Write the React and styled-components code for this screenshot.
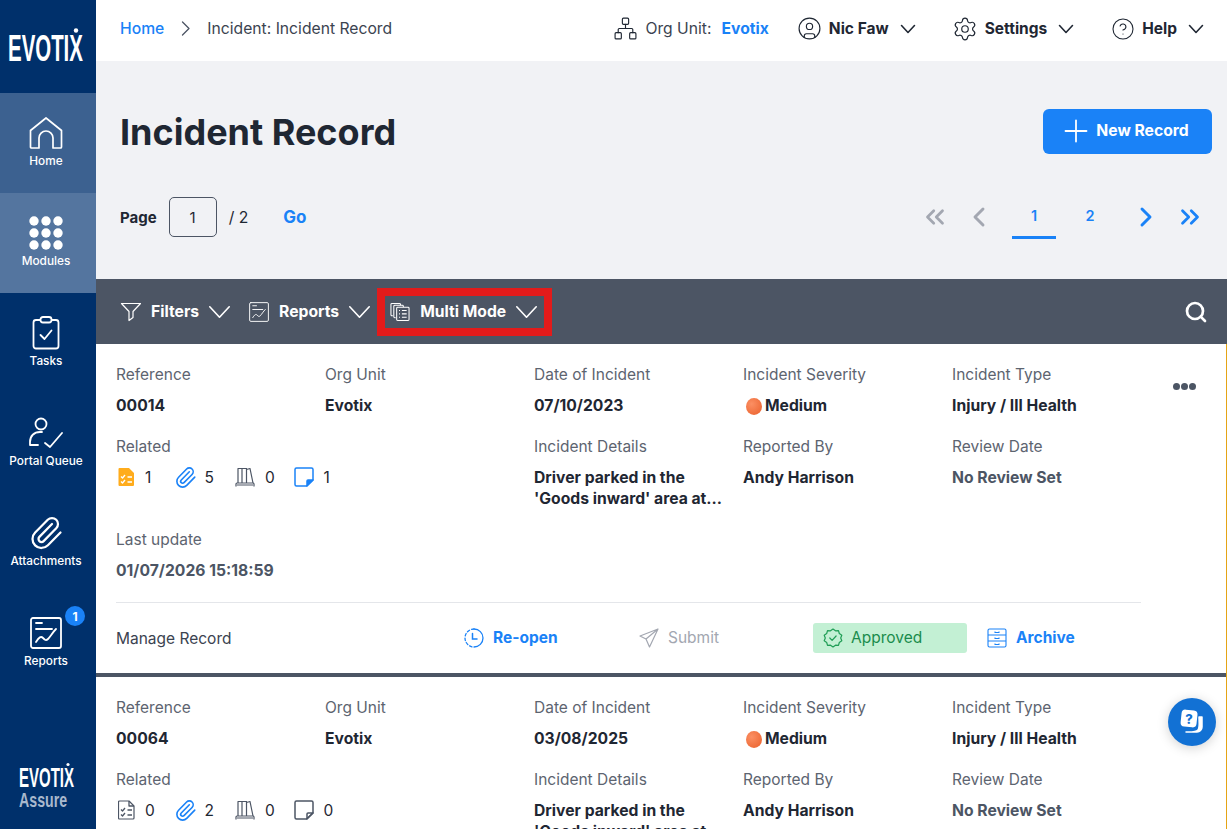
import styled, { createGlobalStyle } from 'styled-components'
import { ChevronLeft, ChevronRight, ChevronsLeft, ChevronsRight, Search, Plus, Settings, CircleHelp, CircleUser, Network, Paperclip } from 'lucide-react'

const GlobalStyle = createGlobalStyle`
  html, body {
    margin: 0;
    height: 100%;
    overflow: hidden;
    background: #fff;
    font-family: Inter, "Open Sans", sans-serif;
    color: #1f2733;
  }
  #root { height: 100%; }
  * { box-sizing: border-box; }
`

const ChevDown = ({ width = 14, stroke = 1.6, color = 'currentColor' }) => (
  <svg width={width} height={width * 0.57} viewBox="0 0 14 8" fill="none" stroke={color} strokeWidth={stroke} strokeLinecap="round" strokeLinejoin="round" style={{ overflow: 'visible' }}>
    <path d="M.5.5 7 7.5 13.500.5" />
  </svg>
)

const ChevRight = () => (
  <svg width="9" height="15" viewBox="0 0 9 15" fill="none" stroke="#4c5564" strokeWidth="1.3" strokeLinecap="round" strokeLinejoin="round">
    <path d="m1.5 1 6.500 6.500L1.500 14" />
  </svg>
)

const HomeIcon = () => (
  <svg width="34" height="34" viewBox="0 0 34 34" fill="none" stroke="#fff" strokeWidth="1.7" strokeLinejoin="round">
    <path d="M1.5 14.500 17 2l15.500 12.500V31a1 1 0 0 1-1 1H24V22a7 7 0 0 0-14 0v10H2.500a1 1 0 0 1-1-1z" />
  </svg>
)

const DotsIcon = () => (
  <svg width="34" height="34" viewBox="0 0 34 34" fill="#fff">
    {[5, 17, 29].map(y => [5, 17, 29].map(x => <circle key={`${x}-${y}`} cx={x} cy={y} r="4.7" />))}
  </svg>
)

const TaskIcon = () => (
  <svg width="28" height="34" viewBox="0 0 28 34" fill="none" stroke="#fff" strokeWidth="1.8" strokeLinejoin="round" strokeLinecap="round">
    <rect x="1.5" y="4" width="25" height="28.5" rx="2.5" />
    <rect x="8.5" y="1" width="11" height="5.5" rx="2.5" fill="#00306b" />
    <path d="m8.5 19 4 4 7-8.500" />
  </svg>
)

const QueueIcon = () => (
  <svg width="34" height="32" viewBox="0 0 34 32" fill="none" stroke="#fff" strokeWidth="1.8" strokeLinecap="round" strokeLinejoin="round">
    <circle cx="12" cy="7" r="5.5" />
    <path d="M1 28v-3c0-6 4-10 10-10h2M1 28h8" />
    <path d="m16 26 5 4 12-14" />
  </svg>
)

const ReportIcon = ({ size = 32, color = '#fff', width = 1.8 }) => (
  <svg width={size} height={size} viewBox="0 0 32 32" fill="none" stroke={color} strokeWidth={width} strokeLinecap="round" strokeLinejoin="round">
    <rect x="1" y="1" width="30" height="30" rx="2" />
    <path d="M6 6h6M6 12h16M6 25c3-5 5-6 7-4s3 3 5 1 5-7 8-10" />
  </svg>
)

const FilterIcon = () => (
  <svg width="21" height="21" viewBox="0 0 21 21" fill="none" stroke="#fff" strokeWidth="1.2" strokeLinejoin="round">
    <path d="M1.5 2.500h19l-7.500 8v6l-4 3v-9z" />
  </svg>
)

const MultiIcon = () => (
  <svg width="20" height="21" viewBox="0 0 21 21" fill="none" stroke="#fff" strokeWidth="1.1" strokeLinejoin="round">
    <path d="M3 15H2a1 1 0 0 1-1-1V3a1 1 0 0 1 1-1h8a1 1 0 0 1 1 1v1" />
    <path d="M6 17H5a1 1 0 0 1-1-1V5a1 1 0 0 1 1-1h8a1 1 0 0 1 1 1v1" />
    <rect x="7" y="6" width="13" height="14" rx="1" fill="#4c5564" />
    <path d="M9.5 9.500h1M9.500 13h1M9.500 16.500h1M12.500 9.500h5M12.500 13h5M12.500 16.500h5" />
  </svg>
)

const ChecklistIcon = ({ filled }) => (
  <svg width="17" height="20" viewBox="0 0 17 20" fill={filled ? '#ffac1c' : 'none'} stroke={filled ? 'none' : '#4c5564'} strokeWidth="1.2" strokeLinejoin="round">
    <path d="M1.5 1h9.500l5 5v12a1 1 0 0 1-1 1H1.500a1 1 0 0 1-1-1V2a1 1 0 0 1 1-1z" />
    <g fill="none" stroke={filled ? '#fff' : '#4c5564'} strokeWidth="1.3">
      <path d="m3 9.500 1.500 1.500 2.500-3M3 14.500l1.500 1.500 2.500-3M9.500 10h4.500M9.500 15h4.500" />
      {!filled && <path d="M11 1v5h5" />}
    </g>
  </svg>
)

const BooksIcon = () => (
  <svg width="20" height="20" viewBox="0 0 20 20" fill="none" stroke="#4c5564" strokeWidth="1.2" strokeLinejoin="round">
    <path d="M3 16V1.500h4V16M7 16V1.500h4.500V16M11.500 2.500l3.500-1 3 14.500" />
    <path d="M1 19.500V17a1 1 0 0 1 1-1h16a1 1 0 0 1 1 1v2.500M2 18h16" />
  </svg>
)

const NoteIcon = ({ color, lit }) => (
  <svg width="20" height="20" viewBox="0 0 20 20" fill="none" stroke={color} strokeWidth="1.5" strokeLinejoin="round">
    <path d="M12.5 19h-10A1.500 1.500 0 0 1 1 17.500v-15A1.500 1.500 0 0 1 2.500 1h15A1.500 1.500 0 0 1 19 2.500V13z" />
    <path d="M13 19v-5a1 1 0 0 1 1-1h5z" fill={lit ? color : 'none'} />
  </svg>
)

const ReopenIcon = () => (
  <svg width="20" height="20" viewBox="0 0 20 20" fill="none" stroke="#1a82f7" strokeWidth="1.3" strokeLinecap="round">
    <path d="M10 1a9 9 0 0 1 0 18" />
    <path d="M10 1a9 9 0 0 0 0 18" strokeDasharray="2.5 2.2" />
    <path d="M8.5 5.500V11H13" strokeWidth="1.5" />
  </svg>
)

const SendIcon = () => (
  <svg width="20" height="20" viewBox="0 0 20 20" fill="none" stroke="#a3a7b1" strokeWidth="1.2" strokeLinejoin="round">
    <path d="M19 1 1 8l6 3 3.500 8zM19 1 7 11" />
  </svg>
)

const BadgeCheckIcon = () => (
  <svg width="20" height="20" viewBox="0 0 20 20" fill="none" stroke="#1f9d55" strokeWidth="1.2" strokeLinejoin="round" strokeLinecap="round">
    <path d="m10 1 2.500 1.800 3-.2.800 2.900 2.500 1.700L17.700 10l1.100 2.800-2.500 1.700-.8 2.900-3-.2L10 19l-2.500-1.800-3 .2-.8-2.900-2.500-1.700L2.300 10 1.200 7.200l2.500-1.700.8-2.900 3 .2z" />
    <path d="m6.800 10 2.300 2.300 4-4.300" />
  </svg>
)

const ArchiveIcon = () => (
  <svg width="20" height="20" viewBox="0 0 20 20" fill="none" stroke="#1a82f7" strokeWidth="1.1" strokeLinejoin="round">
    <rect x="1" y="1" width="18" height="18" rx="1.5" />
    <path d="M1 7h18M1 13h18M8 3.500v1h4v-1M8 9.500v1h4v-1M8 15.500v1h4v-1" />
  </svg>
)

const ChatIcon = () => (
  <svg width="26" height="26" viewBox="0 0 26 26">
    <path d="M23 8v10a5 5 0 0 1-5 5H7c3 0 10 .5 12-2s1-9 1-13z" fill="#fff" stroke="#fff" strokeWidth="1.5" strokeLinejoin="round" />
    <rect x="2" y="1" width="16" height="17" rx="4" fill="#fff" transform="rotate(6 10 10)" />
    <text x="10" y="15" textAnchor="middle" fontSize="13" fontWeight="800" fill="#1271d4" fontFamily="Inter">?</text>
  </svg>
)

const navItems = [
  { label: 'Home', icon: <HomeIcon />, tone: 'home' },
  { label: 'Modules', icon: <DotsIcon />, tone: 'modules' },
  { label: 'Tasks', icon: <TaskIcon /> },
  { label: 'Portal Queue', icon: <QueueIcon /> },
  { label: 'Attachments', icon: <Paperclip size={36} color="#fff" strokeWidth={1.5} /> },
  { label: 'Reports', icon: <ReportIcon />, badge: 1 },
]

const records = [
  { reference: '00014', date: '07/10/2023', counts: [1, 5, 0, 1], lit: true },
  { reference: '00064', date: '03/08/2025', counts: [0, 2, 0, 0], lit: false },
]

function Field({ label, children, span }) {
  return (
    <FieldBox $span={span}>
      <Label>{label}</Label>
      {children}
    </FieldBox>
  )
}

function Record({ record }) {
  const { lit, counts } = record
  return (
    <Card>
      <Grid>
        <Field label="Reference"><Value>{record.reference}</Value></Field>
        <Field label="Org Unit"><Value>Evotix</Value></Field>
        <Field label="Date of Incident"><Value>{record.date}</Value></Field>
        <Field label="Incident Severity"><Value><SeverityDot />Medium</Value></Field>
        <Field label="Incident Type"><Value>Injury / Ill Health</Value></Field>
        <Field label="Related" span={2}>
          <Related>
            <RelatedItem><ChecklistIcon filled={lit} /><Count>{counts[0]}</Count></RelatedItem>
            <RelatedItem><RelatedClip size={23} color="#1a82f7" strokeWidth={1.7} /><Count>{counts[1]}</Count></RelatedItem>
            <RelatedItem><BooksIcon /><Count>{counts[2]}</Count></RelatedItem>
            <RelatedItem><NoteIcon color={lit ? '#1a82f7' : '#4c5564'} lit={lit} /><Count>{counts[3]}</Count></RelatedItem>
          </Related>
        </Field>
        <Field label="Incident Details"><Details>Driver parked in the 'Goods inward' area at...</Details></Field>
        <Field label="Reported By"><Value>Andy Harrison</Value></Field>
        <Field label="Review Date"><Value $muted>No Review Set</Value></Field>
        <Field label="Last update" span={5}><Value $muted>01/07/2026 15:18:59</Value></Field>
      </Grid>
      <MoreDots><i /><i /><i /></MoreDots>
      <ManageRow>
        <ManageLabel>Manage Record</ManageLabel>
        <ManageAction><ReopenIcon />Re-open</ManageAction>
        <ManageAction $off><SendIcon />Submit</ManageAction>
        <Approved><BadgeCheckIcon />Approved</Approved>
        <ManageAction><ArchiveIcon />Archive</ManageAction>
      </ManageRow>
    </Card>
  )
}

export default function App() {
  return (
    <Page>
      <GlobalStyle />
      <Sidebar>
        <LogoBox>
          <svg width="78" height="38" viewBox="0 0 78 38">
            <text transform="scale(0.545 1)" x="0" y="33" fontFamily="Liberation Sans" fontWeight="700" fontSize="37.5" fill="#fff">EVOTIX</text>
            <circle cx="68" cy="2.5" r="2.2" fill="#fff" />
          </svg>
        </LogoBox>
        {navItems.map(item => (
          <NavItem key={item.label} $tone={item.tone}>
            <NavIcon>
              {item.icon}
              {item.badge && <NavBadge>{item.badge}</NavBadge>}
            </NavIcon>
            <NavLabel>{item.label}</NavLabel>
          </NavItem>
        ))}
        <FootLogo>
          <svg width="58" height="56" viewBox="0 0 58 56">
            <text transform="scale(0.555 1)" x="0" y="32" fontFamily="Liberation Sans" fontWeight="700" fontSize="27" fill="#fff">EVOTIX</text>
            <circle cx="49" cy="9.5" r="1.6" fill="#fff" />
            <text transform="scale(0.71 1)" x="0" y="52" fontFamily="Liberation Sans" fontWeight="700" fontSize="20" fill="#a9b8cd">Assure</text>
          </svg>
        </FootLogo>
      </Sidebar>
      <Main>
        <TopBar>
          <Crumbs>
            <CrumbLink>Home</CrumbLink>
            <ChevRight />
            <Crumb>Incident: Incident Record</Crumb>
          </Crumbs>
          <TopMenu>
            <TopItem $gap={28}><Network size={25} strokeWidth={1.1} /><Crumb>Org Unit:</Crumb><CrumbLink $bold>Evotix</CrumbLink></TopItem>
            <TopItem $gap={37}><CircleUser size={25} strokeWidth={1.1} /><TopName>Nic Faw</TopName><ChevWrap><ChevDown /></ChevWrap></TopItem>
            <TopItem $gap={38}><Settings size={26} strokeWidth={1.1} /><TopName>Settings</TopName><ChevWrap><ChevDown /></ChevWrap></TopItem>
            <TopItem><CircleHelp size={24} strokeWidth={1.1} /><TopName>Help</TopName><ChevWrap><ChevDown /></ChevWrap></TopItem>
          </TopMenu>
        </TopBar>
        <Header>
          <TitleRow>
            <Title>Incident Record</Title>
            <NewButton><Plus size={36} strokeWidth={1.2} />New Record</NewButton>
          </TitleRow>
          <PagerRow>
            <PageJump>
              <PageWord>Page</PageWord>
              <PageInput>1</PageInput>
              <PageTotal>/ 2</PageTotal>
              <GoLink>Go</GoLink>
            </PageJump>
            <Pager>
              <PagerIcon><ChevronsLeft size={30} color="#a3a7b1" strokeWidth={2.2} /></PagerIcon>
              <PagerIcon><ChevronLeft size={32} color="#a3a7b1" strokeWidth={2.2} /></PagerIcon>
              <PagerNum $active>1</PagerNum>
              <PagerNum>2</PagerNum>
              <PagerIcon><ChevronRight size={32} color="#1a82f7" strokeWidth={2.2} /></PagerIcon>
              <PagerIcon><ChevronsRight size={30} color="#1a82f7" strokeWidth={2.2} /></PagerIcon>
            </Pager>
          </PagerRow>
        </Header>
        <Toolbar>
          <ToolGroup>
            <Tool><FilterIcon /><ToolText>Filters</ToolText><ChevDown width={21} stroke={1.1} /></Tool>
            <Tool><ReportIcon size={20} width={1.5} /><ToolText>Reports</ToolText><ChevDown width={21} stroke={1.1} /></Tool>
            <Tool $marked><MultiIcon /><ToolText>Multi Mode</ToolText><ChevDown width={21} stroke={1.1} /></Tool>
          </ToolGroup>
          <Search size={24} color="#fff" strokeWidth={2.7} />
        </Toolbar>
        <Records>
          {records.map(r => <Record key={r.reference} record={r} />)}
        </Records>
        <ChatBubble><ChatIcon /></ChatBubble>
      </Main>
    </Page>
  )
}

const Page = styled.div`
  display: flex;
  height: 100%;
  overflow: hidden;
`

const Sidebar = styled.nav`
  width: 96px;
  flex: none;
  background: #00306b;
  display: flex;
  flex-direction: column;
`

const LogoBox = styled.div`
  height: 93px;
  padding: 28px 0 0 8px;
`

const NavItem = styled.div`
  height: 100px;
  display: flex;
  flex-direction: column;
  align-items: center;
  padding: 23px 4px 0 0;
  background: ${p => (p.$tone === 'home' ? '#3c6190' : p.$tone === 'modules' ? '#54759f' : 'transparent')};
`

const NavIcon = styled.div`
  position: relative;
  height: 34px;
  display: flex;
  align-items: center;
  justify-content: center;
`

const NavBadge = styled.span`
  position: absolute;
  top: -10px;
  right: -23px;
  width: 20px;
  height: 20px;
  border-radius: 50%;
  background: #1a82f7;
  color: #fff;
  font-size: 12px;
  font-weight: 700;
  display: flex;
  align-items: center;
  justify-content: center;
`

const NavLabel = styled.span`
  margin-top: 4px;
  color: #fff;
  font-size: 11.8px;
  font-weight: 500;
  white-space: nowrap;
`

const FootLogo = styled.div`
  margin-top: auto;
  height: 74px;
  padding-left: 19px;
`

const Main = styled.main`
  position: relative;
  flex: 1;
  min-width: 0;
  display: flex;
  flex-direction: column;
`

const TopBar = styled.header`
  height: 61px;
  flex: none;
  background: #fff;
  display: flex;
  align-items: center;
  justify-content: space-between;
  padding: 0 24px 4px 24px;
`

const Crumbs = styled.div`
  display: flex;
  align-items: center;
  gap: 17px;
`

const Crumb = styled.span`
  font-size: 15.7px;
  color: #3b4350;
`

const CrumbLink = styled.span`
  font-size: 15.7px;
  color: #1a82f7;
  font-weight: ${p => (p.$bold ? 700 : 500)};
`

const TopMenu = styled.div`
  display: flex;
  align-items: center;
`

const TopItem = styled.div`
  display: flex;
  align-items: center;
  gap: 7px;
  margin-right: ${p => p.$gap || 0}px;

  ${CrumbLink} {
    margin-left: 3px;
  }
`

const TopName = styled.span`
  font-size: 15.5px;
  font-weight: 700;
  color: #1f2733;
`

const ChevWrap = styled.span`
  display: flex;
  margin-left: 5px;
`

const Header = styled.section`
  height: 218px;
  flex: none;
  background: #f1f2f5;
  padding: 48px 15px 0 24px;
`

const TitleRow = styled.div`
  display: flex;
  align-items: center;
  justify-content: space-between;
`

const Title = styled.h1`
  margin: 0;
  font-size: 36px;
  line-height: 44px;
  font-weight: 700;
  color: #1f2733;
`

const NewButton = styled.button`
  width: 169px;
  height: 45px;
  border: 0;
  border-radius: 6px;
  padding: 0 8px 2px 0;
  background: #1a82f7;
  color: #fff;
  font: 700 15.7px Inter, sans-serif;
  display: flex;
  align-items: center;
  justify-content: center;
  gap: 2px;
`

const PagerRow = styled.div`
  margin-top: 41px;
  display: flex;
  align-items: center;
  justify-content: space-between;
`

const PageJump = styled.div`
  display: flex;
  align-items: center;
`

const PageWord = styled.span`
  font-size: 15px;
  font-weight: 700;
  margin-right: 12px;
`

const PageInput = styled.div`
  width: 48px;
  height: 40px;
  border: 1px solid #4c5564;
  border-radius: 5px;
  font-size: 15px;
  display: flex;
  align-items: center;
  justify-content: center;
`

const PageTotal = styled.span`
  font-size: 15.7px;
  margin-left: 12px;
  margin-right: 35px;
`

const GoLink = styled.span`
  font-size: 17px;
  font-weight: 700;
  color: #1a82f7;
`

const Pager = styled.div`
  display: flex;
  align-items: center;
`

const PagerIcon = styled.span`
  width: 44px;
  height: 44px;
  display: flex;
  align-items: center;
  justify-content: center;
`

const PagerNum = styled.span`
  width: 44px;
  height: 44px;
  margin: ${p => (p.$active ? '0 6px 0 11px' : '0 12px 0 6px')};
  display: flex;
  align-items: center;
  justify-content: center;
  color: #1a82f7;
  font-size: 14.5px;
  font-weight: 600;
  border-bottom: 3px solid ${p => (p.$active ? '#1a82f7' : 'transparent')};
`

const Toolbar = styled.div`
  height: 65px;
  flex: none;
  background: #4c5564;
  display: flex;
  align-items: center;
  justify-content: space-between;
  padding: 0 19px 0 24px;
`

const ToolGroup = styled.div`
  display: flex;
  align-items: center;
  gap: 19px;
`

const Tool = styled.div`
  display: flex;
  align-items: center;
  gap: 10px;
  color: #fff;
  ${p => p.$marked && `
    outline: 8px solid #e31b1b;
    outline-offset: -8px;
    height: 48px;
    padding: 0 15px 0 13px;
    margin-left: -12px;
  `}
`

const ToolText = styled.span`
  font-size: 15.7px;
  font-weight: 700;
`

const Records = styled.div`
  flex: 1;
  min-height: 0;
  overflow: hidden;
  border-right: 1px solid #e5a416;
`

const Card = styled.article`
  position: relative;
  height: 333px;
  padding: 22px 0 0 20px;
  border-bottom: 4px solid #4c5564;
  background: #fff;
`

const Grid = styled.div`
  display: grid;
  grid-template-columns: repeat(5, 209px);
  grid-auto-rows: auto;
  row-gap: 23px;
  height: 213px;
  align-content: start;
`

const FieldBox = styled.div`
  grid-column: span ${p => p.$span || 1};
  display: flex;
  flex-direction: column;
  gap: 13px;
`

const Label = styled.span`
  font-size: 15.5px;
  line-height: 18px;
  color: #5d6470;
`

const Value = styled.span`
  display: flex;
  align-items: center;
  font-size: 15.7px;
  line-height: 18px;
  font-weight: 700;
  color: ${p => (p.$muted ? '#4c5564' : '#1f2733')};
`

const Details = styled(Value)`
  display: block;
  width: 190px;
  margin: -2px 0 -1px;
  line-height: 21px;
`

const SeverityDot = styled.i`
  width: 16px;
  height: 17px;
  margin: 0 3px;
  border-radius: 50%;
  background: radial-gradient(circle at 35% 35%, #fb8f63, #ea5f2a);
`

const Related = styled.div`
  display: flex;
  align-items: center;
  height: 20px;
  margin-top: -2px;
  padding-left: 2px;
`

const RelatedItem = styled.span`
  width: 58.5px;
  display: flex;
  align-items: center;
  gap: 10px;
`

const RelatedClip = styled(Paperclip)`
  margin: 0 -2px 0 -3px;
`

const Count = styled.span`
  font-size: 15.5px;
  color: #1f2733;
`

const MoreDots = styled.span`
  position: absolute;
  top: 39px;
  right: 30px;
  display: flex;
  gap: 1px;

  i {
    width: 7px;
    height: 7px;
    border-radius: 50%;
    background: #4c5564;
  }
`

const ManageRow = styled.div`
  width: 1025px;
  height: 71px;
  margin-top: 23px;
  border-top: 1px solid #e4e6ea;
  display: grid;
  grid-template-columns: 348px 175px 174px 174px auto;
  align-items: center;
`

const ManageLabel = styled.span`
  font-size: 15.5px;
  color: #3b4350;
`

const ManageAction = styled.span`
  display: flex;
  align-items: center;
  gap: 9px;
  padding-bottom: 1px;
  font-size: 15.5px;
  font-weight: ${p => (p.$off ? 400 : 700)};
  color: ${p => (p.$off ? '#a3a7b1' : '#1a82f7')};
`

const Approved = styled.span`
  width: 154px;
  height: 30px;
  padding: 0 0 1px 10px;
  border-radius: 3px;
  background: #c3f0d4;
  color: #1a8c4c;
  font-size: 15.5px;
  display: flex;
  align-items: center;
  gap: 8px;
`

const ChatBubble = styled.div`
  position: absolute;
  left: 1072px;
  top: 698px;
  width: 48px;
  height: 48px;
  border-radius: 50%;
  background: #1271d4;
  box-shadow: 0 2px 12px rgba(0, 0, 0, 0.18);
  display: flex;
  align-items: center;
  justify-content: center;
`
